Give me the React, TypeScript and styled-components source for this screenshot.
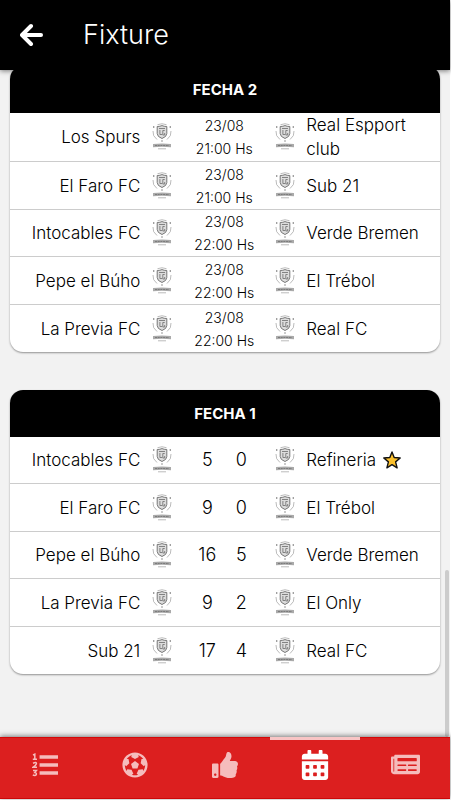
import React from "react";
import styled, { createGlobalStyle } from "styled-components";
import { FaFutbol, FaThumbsUp, FaCalendarAlt, FaNewspaper } from "react-icons/fa";

const GlobalStyle = createGlobalStyle`
  * { box-sizing: border-box; }
  body {
    margin: 0;
    background: #fff;
    color: #000;
    font-family: Inter, "Noto Sans", sans-serif;
    font-weight: 300;
  }
`;

const Screen = styled.div`
  display: flex;
  flex-direction: column;
  height: 100vh;
  padding: 0 1px 1px 0;
  overflow: hidden;
`;

const TopBar = styled.header`
  display: flex;
  align-items: center;
  flex: none;
  gap: 39px;
  height: 70px;
  padding: 0 20px;
  background: #000;
  color: #fff;
  box-shadow: 0 1px 5px rgba(0, 0, 0, 0.5);
  z-index: 2;
`;

const BackButton = styled.button`
  display: flex;
  padding: 0;
  border: 0;
  background: none;
  color: inherit;
  cursor: pointer;
`;

const Title = styled.h1`
  margin: 0;
  font-size: 27px;
  line-height: 32px;
  font-weight: 300;
`;

const Body = styled.div`
  position: relative;
  flex: 1;
  min-height: 0;
  display: flex;
  background: #f2f2f2;
`;

const Rounds = styled.main`
  flex: 1;
  display: flex;
  flex-direction: column;
  gap: 38px;
  margin-top: -4px;
  padding: 0 10px;
`;

const ScrollThumb = styled.div`
  position: absolute;
  right: 1px;
  bottom: 0;
  width: 4px;
  height: 25%;
  border-radius: 2px;
  background: #ccc;
`;

const Card = styled.section`
  flex: none;
  border-radius: 13px;
  background: #fff;
  overflow: hidden;
  box-shadow: 0 1px 2px rgba(0, 0, 0, 0.4);
`;

const RoundTable = styled.table`
  width: 100%;
  table-layout: fixed;
  border-spacing: 0;
`;

const RoundName = styled.caption`
  background: #000;
  color: #fff;
  font-size: 15px;
  line-height: 47px;
  font-weight: 700;
`;

const Row = styled.tr`
  height: 47px;
  &:nth-child(even) { height: 48px; }
  &:not(:last-child) > td { border-bottom: 1px solid #ccc; }
`;

const HomeCol = styled.col`
  width: 41%;
`;

const MiddleCol = styled.col`
  width: 76px;
`;

const Cell = styled.td`
  padding: 0;
`;

const Side = styled.div<{ $home?: boolean }>`
  display: flex;
  flex-direction: ${(p) => (p.$home ? "row-reverse" : "row")};
  align-items: center;
  gap: ${(p) => (p.$home ? "12px" : "11px")};
  padding: ${(p) => (p.$home ? "0 14px 0 0" : "0 12px 0 13px")};
  font-size: 17px;
  line-height: 24px;
`;

const TeamName = styled.span`
  display: flex;
  align-items: center;
  gap: 7px;
`;

const Kickoff = styled.div`
  text-align: center;
  font-size: 14px;
  line-height: 23px;
`;

const Score = styled.div`
  display: grid;
  grid-template-columns: 1fr 1fr;
  padding: 0 4px;
  text-align: center;
  font-size: 18px;
  line-height: 24px;
`;

const CrestArt = styled.svg`
  flex: none;
  width: 20px;
  height: 28px;
`;

const TabBar = styled.nav`
  display: flex;
  flex: none;
  height: 62px;
  background: #dc1f1f;
  border-top: 1px solid #d40808;
  border-bottom: 1px solid #cc0808;
  box-shadow: 0 -1px 5px rgba(0, 0, 0, 0.5);
  z-index: 2;
`;

const Tab = styled.button<{ $active?: boolean; $size: number }>`
  flex: 1;
  display: flex;
  align-items: center;
  justify-content: center;
  margin-top: -1px;
  padding: 0 0 9px;
  border: 0;
  border-top: 3px solid ${(p) => (p.$active ? "#f8c5c5" : "transparent")};
  background: none;
  color: ${(p) => (p.$active ? "#fff" : "#f5bcbc")};
  font-size: ${(p) => p.$size}px;
  cursor: pointer;
`;

function BackArrow() {
  return (
    <svg width="24" height="24" viewBox="0 0 24 24" fill="none" stroke="currentColor" strokeLinecap="round" strokeLinejoin="round" aria-hidden="true">
      <path d="M11 3L2 12L11 21" strokeWidth="4" />
      <path d="M3 12H21" strokeWidth="4" />
    </svg>
  );
}

function NumberedList() {
  return (
    <svg width="1em" height="1em" viewBox="0 0 26 26" fill="none" stroke="currentColor" aria-hidden="true">
      <path d="M9 5H25.500M9 13H25.500M9 21H25.500" strokeWidth="3.600" strokeLinecap="square" transform="translate(.8 0) scale(.94 1)" />
      <path d="M1 3L2.800 2.200V7M.8 7.300H5" strokeWidth="1.500" />
      <path d="M1 11.300Q4.600 9.600 4.400 11.800Q3.800 13.500 1.200 15.200H5" strokeWidth="1.500" />
      <path d="M1 18.500H4.400L2.800 20.500Q4.800 20.600 4.300 22.600Q3.400 24 .8 23" strokeWidth="1.500" />
    </svg>
  );
}

function Crest() {
  return (
    <CrestArt viewBox="0 0 20 28" fill="none" aria-hidden="true">
      <path d="M5.500 1.700Q10-.2 14.500 1.700M1 8Q.3 13 5 16.500M19 8Q19.700 13 15 16.500" stroke="#aaa" strokeWidth=".8" />
      <path d="M5.200 3.500Q8 3.500 10 2.600Q12 3.500 14.800 3.500V10.500Q14.800 13.800 10 15.500Q5.200 13.800 5.200 10.500Z" fill="#ddd" stroke="#777" strokeWidth="1" />
      <path d="M7 5.500H13M7.900 7V11.500H10M12.700 7.500H10.800V12H12.700V10" stroke="#777" strokeWidth=".9" />
      <circle cx="1.700" cy="4" r=".8" fill="#666" />
      <circle cx="18.300" cy="4" r=".8" fill="#666" />
      <circle cx="10" cy="18" r=".8" fill="#888" />
      <path d="M1 21Q10 20.200 19 21V24.200Q10 23.400 1 24.200Z" fill="#aaa" />
      <path d="M3 22.500H17" stroke="#777" strokeDasharray="2 .7" strokeWidth=".9" />
      <path d="M6 25.800H14" stroke="#bbb" strokeWidth="1" />
    </CrestArt>
  );
}

function Star() {
  return (
    <svg width="18" height="18" viewBox="0 0 18 18" aria-label="Destacado" role="img">
      <path d="M9 1L11.200 6.500L17.200 7L12.600 10.900L14.100 16.800L9 13.600L3.900 16.800L5.400 10.900L.8 7L6.800 6.500Z" fill="#fbc02d" stroke="#111" strokeWidth="1.400" strokeLinejoin="round" />
    </svg>
  );
}

type Match = { home: string; away: string; date?: string; time?: string; goals?: [number, number]; star?: boolean };

const rounds: { name: string; matches: Match[] }[] = [
  {
    name: "FECHA 2",
    matches: [
      { home: "Los Spurs", away: "Real Espport club", date: "23/08", time: "21:00 Hs" },
      { home: "El Faro FC", away: "Sub 21", date: "23/08", time: "21:00 Hs" },
      { home: "Intocables FC", away: "Verde Bremen", date: "23/08", time: "22:00 Hs" },
      { home: "Pepe el Búho", away: "El Trébol", date: "23/08", time: "22:00 Hs" },
      { home: "La Previa FC", away: "Real FC", date: "23/08", time: "22:00 Hs" },
    ],
  },
  {
    name: "FECHA 1",
    matches: [
      { home: "Intocables FC", away: "Refineria", goals: [5, 0], star: true },
      { home: "El Faro FC", away: "El Trébol", goals: [9, 0] },
      { home: "Pepe el Búho", away: "Verde Bremen", goals: [16, 5] },
      { home: "La Previa FC", away: "El Only", goals: [9, 2] },
      { home: "Sub 21", away: "Real FC", goals: [17, 4] },
    ],
  },
];

const tabs = [
  { label: "Posiciones", Icon: NumberedList, size: 26 },
  { label: "Goleadores", Icon: FaFutbol, size: 26 },
  { label: "Fair play", Icon: FaThumbsUp, size: 26 },
  { label: "Fixture", Icon: FaCalendarAlt, size: 30, active: true },
  { label: "Noticias", Icon: FaNewspaper, size: 29 },
];

export default function App() {
  return (
    <Screen>
      <GlobalStyle />
      <TopBar>
        <BackButton aria-label="Volver"><BackArrow /></BackButton>
        <Title>Fixture</Title>
      </TopBar>
      <Body>
        <Rounds>
          {rounds.map((round) => (
            <Card key={round.name}>
              <RoundTable>
                <RoundName>{round.name}</RoundName>
                <colgroup><HomeCol /><MiddleCol /><col /></colgroup>
                <tbody>
                  {round.matches.map((m) => (
                    <Row key={m.home}>
                      <Cell><Side $home><Crest /><TeamName>{m.home}</TeamName></Side></Cell>
                      <Cell>
                        {m.goals
                          ? <Score><span>{m.goals[0]}</span><span>{m.goals[1]}</span></Score>
                          : <Kickoff><div>{m.date}</div><div>{m.time}</div></Kickoff>}
                      </Cell>
                      <Cell><Side><Crest /><TeamName>{m.away}{m.star && <Star />}</TeamName></Side></Cell>
                    </Row>
                  ))}
                </tbody>
              </RoundTable>
            </Card>
          ))}
        </Rounds>
        <ScrollThumb />
      </Body>
      <TabBar aria-label="Secciones">
        {tabs.map(({ label, Icon, size, active }) => (
          <Tab key={label} aria-label={label} $active={active} $size={size}><Icon /></Tab>
        ))}
      </TabBar>
    </Screen>
  );
}
